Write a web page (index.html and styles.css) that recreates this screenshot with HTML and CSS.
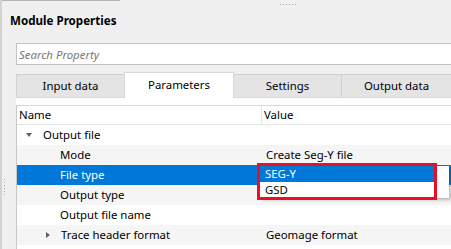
FILE: index.html
```html
<!DOCTYPE html>
<html lang="en">
<head>
    <meta charset="UTF-8">
    <title>Module Properties</title>
    <link rel="stylesheet" href="styles.css">
</head>
<body>
    <div class="window">
        <div class="top-edge">
            <span class="frame-line"></span>
            <span class="grip-h"></span>
        </div>
        <h1 class="title">Module Properties</h1>

        <div class="body-row">
            <div class="splitter"><span class="grip-v"></span></div>

            <div class="content">
                <div class="search"><input type="text" placeholder="Search Property"></div>

                <div class="tabs">
                    <div class="tab">Input data</div>
                    <div class="tab active">Parameters</div>
                    <div class="tab">Settings</div>
                    <div class="tab">Output data</div>
                </div>

                <div class="pane">
                    <div class="tree">
                        <div class="tree-head">
                            <div class="cell-name">Name</div>
                            <div class="cell-value">Value</div>
                        </div>

                        <div class="row">
                            <div class="cell-name lvl-0"><span class="arrow down"></span>Output file</div>
                            <div class="cell-value"></div>
                        </div>
                        <div class="row alt">
                            <div class="cell-name lvl-1">Mode</div>
                            <div class="cell-value">Create Seg-Y file</div>
                        </div>
                        <div class="row selected">
                            <div class="cell-name lvl-1">File type</div>
                            <div class="cell-value">
                                <div class="popup">
                                    <div class="item current">SEG-Y</div>
                                    <div class="item">GSD</div>
                                </div>
                                <div class="highlight"></div>
                            </div>
                        </div>
                        <div class="row alt">
                            <div class="cell-name lvl-1">Output type</div>
                            <div class="cell-value"></div>
                        </div>
                        <div class="row">
                            <div class="cell-name lvl-1">Output file name</div>
                            <div class="cell-value"></div>
                        </div>
                        <div class="row alt">
                            <div class="cell-name lvl-1b"><span class="arrow right"></span>Trace header format</div>
                            <div class="cell-value">Geomage format</div>
                        </div>
                        <div class="tree-rest"></div>
                    </div>
                </div>
            </div>
        </div>
    </div>
</body>
</html>
```

FILE: styles.css
```css
body {
    margin: 0;
    width: 451px;
    height: 249px;
    overflow: hidden;
    background-color: #f0f0f0;
    font-family: "Noto Sans", "Open Sans", sans-serif;
    font-size: 11.4px;
    color: #000;
}
.window {
    height: 249px;
    border-left: 2px solid #d2d2d2;
    box-sizing: border-box;
}
.top-edge {
    display: flex;
    height: 6px;
}
.frame-line {
    width: 118px;
    height: 1px;
    background: #b4b4b4;
}
.grip-h {
    width: 17px;
    height: 1px;
    margin: 4px 0 0 160px;
    background: linear-gradient(to right, #a8a8a8 1px, transparent 1px) 0 0 / 3px 1px repeat-x;
}
.title {
    margin: 7px 0 0 8px;
    font-size: 11.6px;
    line-height: 16px;
    font-weight: bold;
}
.body-row {
    display: flex;
    margin-top: 14px;
}
.splitter {
    width: 14px;
    flex: none;
}
.grip-v {
    display: block;
    width: 1px;
    height: 17px;
    margin: 136px 0 0 2px;
    background: linear-gradient(to bottom, #a8a8a8 1px, transparent 1px) 0 0 / 1px 3px repeat-y;
}
.content {
    width: 440px;
    flex: none;
}
.search input {
    display: block;
    width: 100%;
    height: 22px;
    box-sizing: border-box;
    margin: 0;
    padding: 0 2px;
    border: 1px solid #c2c2c2;
    background: #fff;
    font: italic 11.4px "Noto Sans", sans-serif;
    outline: none;
}
.search input::placeholder {
    color: #777;
}
.tabs {
    display: flex;
    align-items: flex-end;
    height: 25px;
    margin-top: 7px;
}
.tab {
    width: 109px;
    height: 23px;
    box-sizing: border-box;
    margin-left: -1px;
    border: 1px solid #d0d0d0;
    border-bottom: none;
    background: #e4e4e4;
    text-align: center;
    line-height: 22px;
}
.tab:first-child {
    margin-left: 0;
}
.tab.active {
    width: 110px;
    height: 26px;
    margin-bottom: -1px;
    position: relative;
    z-index: 1;
    background: #fff;
    border-color: #d9d9d9;
    line-height: 24px;
}
.tab:last-child {
    width: 111px;
}
.pane {
    border-top: 1px solid #d9d9d9;
    background: #fff;
    padding-top: 7px;
}
.tree {
    border-left: 1px solid #c8c8c8;
    border-top: 1px solid #d9d9d9;
    background: #fff;
}
.tree-head {
    display: flex;
    height: 18px;
    line-height: 18px;
    border-bottom: 1px solid #e5e5e5;
}
.tree-head .cell-name {
    width: 242px;
    padding-left: 2px;
    border-right: 1px solid #e5e5e5;
}
.tree-head .cell-value {
    padding-left: 2px;
}
.row {
    display: flex;
    height: 20px;
    line-height: 20px;
}
.row.alt {
    background: #f5f5f5;
}
.row.selected {
    background: #0078d7;
    color: #fff;
}
.row .cell-name {
    width: 243px;
    flex: none;
    box-sizing: border-box;
}
.row .cell-value {
    position: relative;
    flex: 1;
    padding-left: 6px;
}
.tree-rest {
    height: 4px;
}
.lvl-0 { padding-left: 9px; }
.lvl-1 { padding-left: 43px; }
.lvl-1b { padding-left: 29px; }
.arrow {
    display: inline-block;
    width: 0;
    height: 0;
    vertical-align: middle;
}
.arrow.down {
    margin: 0 11px 2px 0;
    border-left: 3px solid transparent;
    border-right: 3px solid transparent;
    border-top: 4px solid #606060;
}
.arrow.right {
    margin: 0 11px 2px 0;
    border-top: 3px solid transparent;
    border-bottom: 3px solid transparent;
    border-left: 4px solid #606060;
}
.popup {
    position: absolute;
    top: 1px;
    left: 0;
    width: 189px;
    height: 32px;
    background: #fff;
    color: #000;
    box-shadow: 2px 2px 3px rgba(0, 0, 0, 0.25);
}
.popup .item {
    height: 16px;
    line-height: 16px;
    padding-left: 5px;
    margin-right: 15px;
}
.popup .item.current {
    background: #0078d7;
    color: #fff;
}
.highlight {
    position: absolute;
    top: -2px;
    left: -3px;
    width: 180px;
    height: 37px;
    box-sizing: border-box;
    border: 3px solid #e81123;
}
```
